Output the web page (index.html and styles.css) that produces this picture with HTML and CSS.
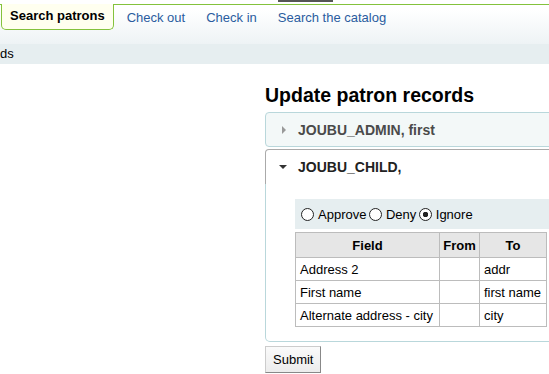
FILE: index.html
```html
<!DOCTYPE html>
<html lang="en">

<head>
    <meta charset="UTF-8">
    <meta name="viewport" content="width=device-width, initial-scale=1.0">
    <title>Update patron records</title>
    <link rel="stylesheet" href="styles.css">
</head>

<body>
    <div class="header">
        <div class="user-edge"></div>
        <ul class="tabs">
            <li class="tab active">Search patrons</li>
            <li class="tab"><a href="#">Check out</a></li>
            <li class="tab"><a href="#">Check in</a></li>
            <li class="tab"><a href="#">Search the catalog</a></li>
        </ul>
    </div>
    <div class="breadcrumbs">ds</div>

    <div class="main">
        <div class="sidebar"></div>
        <div class="content">
            <h1>Update patron records</h1>
            <div class="accordion">
                <h3 class="acc-header closed"><span class="arrow right"></span>JOUBU_ADMIN, first</h3>
                <h3 class="acc-header open"><span class="arrow down"></span>JOUBU_CHILD,</h3>
                <div class="acc-panel">
                    <div class="choices">
                        <label><input type="radio" name="action_2">Approve</label>
                        <label><input type="radio" name="action_2">Deny</label>
                        <label><input type="radio" name="action_2" checked>Ignore</label>
                    </div>
                    <table class="changes">
                        <colgroup>
                            <col class="col-field">
                            <col class="col-from">
                            <col class="col-to">
                        </colgroup>
                        <tr>
                            <th>Field</th>
                            <th>From</th>
                            <th>To</th>
                        </tr>
                        <tr>
                            <td>Address 2</td>
                            <td></td>
                            <td>addr</td>
                        </tr>
                        <tr>
                            <td>First name</td>
                            <td></td>
                            <td>first name</td>
                        </tr>
                        <tr>
                            <td>Alternate address - city</td>
                            <td></td>
                            <td>city</td>
                        </tr>
                    </table>
                </div>
            </div>
            <button class="submit">Submit</button>
        </div>
    </div>
</body>

</html>
```

FILE: styles.css
```css
body {
    margin: 0;
    font-family: "Liberation Sans", Arial, sans-serif;
    font-size: 13px;
    color: #000;
    overflow: hidden;
    background: #fff;
}

/* header with tabs */
.header {
    height: 44px;
    background: linear-gradient(#ffffff 10px, #f8fafb 24px, #eef3f5 44px);
}
.user-edge {
    margin-left: 278px;
    width: 55px;
    height: 2px;
    background-color: #555;
}
.tabs {
    display: flex;
    margin: 2px 0 0 0;
    padding: 0;
    list-style: none;
    border-top: 1px solid #84c23c;
}
.tab {
    padding: 0 10.5px;
    line-height: 25px;
}
.tab a {
    color: #2a5c9f;
    text-decoration: none;
}
.tab.active {
    margin: -1px 2.5px 0 1px;
    padding: 0 8px;
    height: 25px;
    line-height: 24px;
    font-weight: bold;
    background-color: #ffffef;
    border: 1px solid #84c23c;
    border-top: none;
    border-radius: 0 0 5px 5px;
}
.breadcrumbs {
    height: 20px;
    line-height: 20px;
    background-color: #e6eef0;
}

/* main layout */
.main {
    display: flex;
}
.sidebar {
    width: 265px;
    flex-shrink: 0;
}
.content {
    width: 310px;
    flex-shrink: 0;
}
h1 {
    margin: 20px 0 6px;
    font-size: 19.5px;
    line-height: 22px;
    color: #000;
}

/* accordion */
.accordion {
    width: 310px;
}
.acc-header {
    display: flex;
    align-items: center;
    margin: 0;
    height: 33px;
    padding-left: 13px;
    font-size: 14px;
    font-weight: bold;
    border: 1px solid #b9d7db;
    border-radius: 4px;
}
.acc-header.closed {
    color: #4a4a4a;
    background-color: #f3f8f8;
}
.acc-header.open {
    margin-top: 2px;
    color: #222;
    background-color: #fff;
    border-color: #aaa;
    border-bottom: none;
    border-radius: 4px 4px 0 0;
    height: 34px;
}
.arrow {
    display: inline-block;
    width: 19px;
}
.arrow.right::before {
    content: "";
    display: block;
    margin-left: 3px;
    width: 0;
    height: 0;
    border-left: 4px solid #999;
    border-top: 4px solid transparent;
    border-bottom: 4px solid transparent;
}
.arrow.down::before {
    content: "";
    display: block;
    width: 0;
    height: 0;
    border-top: 4px solid #333;
    border-left: 4px solid transparent;
    border-right: 4px solid transparent;
}
.acc-panel {
    padding: 15px 0 14px 29px;
    border: 1px solid #b9d7db;
    border-top: none;
    border-radius: 0 0 5px 5px;
}
.choices {
    display: flex;
    align-items: center;
    height: 30px;
    padding-left: 6px;
    background-color: #e6eef0;
}
.choices label {
    display: flex;
    align-items: center;
    margin-right: 2.5px;
}
.choices input {
    appearance: none;
    margin: 0 4px 0 0;
    width: 13px;
    height: 13px;
    border: 1px solid #222;
    border-radius: 50%;
    background-color: #fff;
}
.choices input:checked {
    background: radial-gradient(circle, #222 0, #222 2.5px, #fff 3px);
}

/* changes table */
.changes {
    margin-top: 3px;
    width: 251px;
    table-layout: fixed;
    border-collapse: collapse;
}
.col-field {
    width: 144px;
}
.col-from {
    width: 40px;
}
.col-to {
    width: 67px;
}
.changes th,
.changes td {
    height: 22px;
    padding: 0 4px;
    border: 1px solid #bcbcbc;
    text-align: left;
    white-space: nowrap;
}
.changes th {
    height: 24px;
    padding: 0 2px;
    text-align: center;
    background-color: #e6e6e6;
}

.submit {
    margin-top: 4px;
    height: 27px;
    padding: 0 7px;
    font-family: "Liberation Sans", Arial, sans-serif;
    font-size: 13px;
    color: #000;
    background: linear-gradient(#fafafa, #ececec);
    border: 1px solid #ccc;
    border-right-color: #888;
    border-bottom-color: #888;
    border-radius: 0;
}
```
